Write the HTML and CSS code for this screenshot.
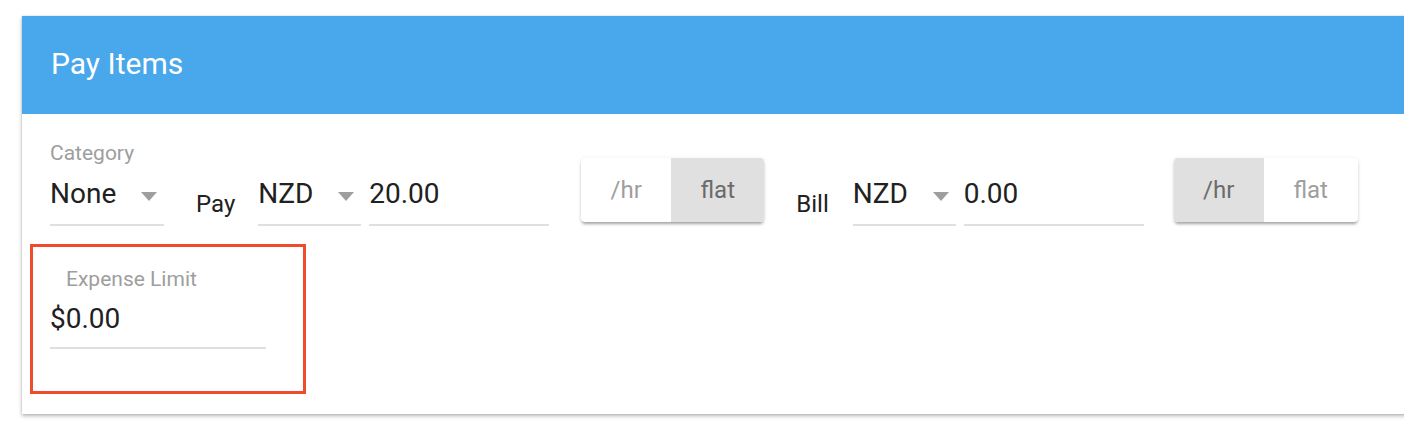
FILE: index.html
```html
<!DOCTYPE html>
<html lang="en">
<head>
  <meta charset="UTF-8">
  <title>Pay Items</title>
  <meta name="viewport" content="width=device-width, initial-scale=1.0">
  <link rel="stylesheet" href="styles.css">
</head>
<body>
<div class="page">
  <div class="card">
    <div class="card-header">Pay Items</div>
    <div class="card-body">
      <!-- pay / bill row -->
      <div class="row">
        <div class="field category">
          <div class="field-label">Category</div>
          <div class="control select">None<span class="arrow"></span></div>
        </div>
        <div class="inline-label pay-label">Pay</div>
        <div class="control select currency">NZD<span class="arrow"></span></div>
        <div class="control amount">20.00</div>
        <div class="toggle">
          <div class="toggle-btn hr">/hr</div>
          <div class="toggle-btn flat selected">flat</div>
        </div>
        <div class="inline-label bill-label">Bill</div>
        <div class="control select currency">NZD<span class="arrow"></span></div>
        <div class="control amount">0.00</div>
        <div class="toggle">
          <div class="toggle-btn hr selected">/hr</div>
          <div class="toggle-btn flat wide">flat</div>
        </div>
      </div>
      <!-- expense limit (highlighted) -->
      <div class="highlight">
        <div class="field expense">
          <div class="field-label">Expense Limit</div>
          <div class="control">$0.00</div>
        </div>
      </div>
    </div>
  </div>
</div>
</body>
</html>
```

FILE: styles.css
```css
html { overflow: hidden; }
html, body { margin: 0; padding: 0; background: #fff; }
body { font-family: Roboto, "Noto Sans", Arial, sans-serif; color: #212121; }

.page { padding: 16px 0 30px 22px; }

.card { background: #fff; margin-right: -40px; box-shadow: 0 2px 4px rgba(0,0,0,.28), 0 0 2px rgba(0,0,0,.12); }
.card-header { height: 98px; background: #48a8eb; color: #fff; font-size: 30px; display: flex; align-items: center; padding: 0 0 3px 29px; box-sizing: border-box; }
.card-body { padding: 27px 0 20px 28px; }

.row { display: flex; align-items: flex-end; }

.field { display: flex; flex-direction: column; }
.field-label { font-size: 21px; line-height: 24px; color: #9e9e9e; }

.control { font-size: 28px; line-height: 36px; padding: 11px 0 12px; border-bottom: 2px solid #e0e0e0; box-sizing: border-box; white-space: nowrap; }
.select { display: flex; justify-content: space-between; }
.arrow { width: 0; height: 0; border-left: 8.5px solid transparent; border-right: 8.5px solid transparent; border-top: 9px solid #9e9e9e; margin: 16px 7px 0 0; }

.category { width: 114px; }
.currency { width: 103px; }
.amount { width: 180px; margin-left: 8px; }

.inline-label { font-size: 24px; line-height: 30px; margin-bottom: 7px; }
.pay-label { margin: 0 23px 7px 32px; }
.bill-label { margin: 0 24px 7px 32px; }

.toggle { display: flex; height: 64px; margin: 0 0 4px 32px; border-radius: 4px; overflow: hidden; background: #fff; box-shadow: 0 3px 3px -1px rgba(0,0,0,.3), 0 1px 4px rgba(0,0,0,.12); }
.toggle:last-child { margin-left: 30px; }
.toggle-btn { width: 90px; display: flex; align-items: center; justify-content: center; font-size: 24px; color: #9e9e9e; }
.toggle-btn.flat { width: 93px; }
.toggle-btn.wide { width: 94px; }
.toggle-btn.selected { background: #e0e0e0; color: #6b6b6b; }

.highlight { display: inline-block; margin: 18px 0 0 -20px; padding: 21px 37px 42px 17px; border: 3px solid #ee4a2b; }
.expense { width: 216px; }
.expense .field-label { line-height: 22px; padding-left: 16px; }
.expense .control { padding-bottom: 10px; }
```
